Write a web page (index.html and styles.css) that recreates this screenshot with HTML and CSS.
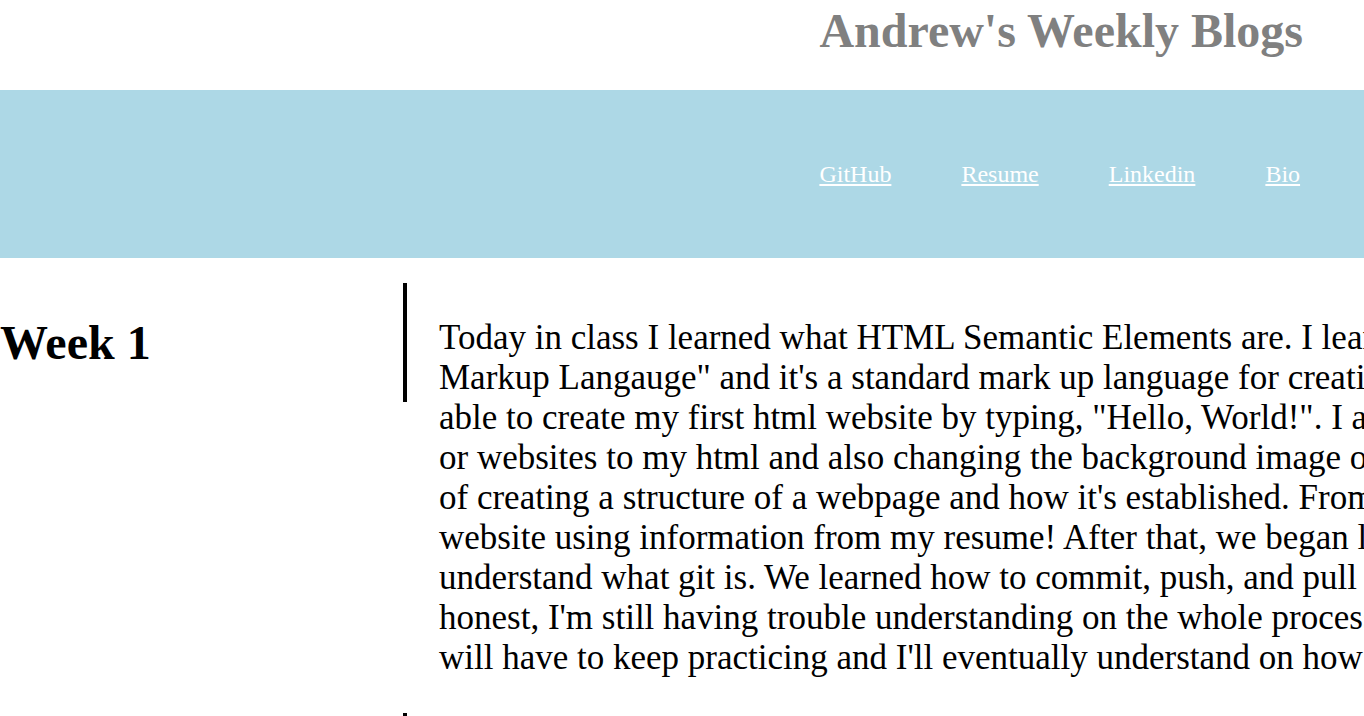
FILE: index.html
```html
<!DOCTYPE html>
<html lang="en">
<head>
<meta charset="utf-8">
<title>Andrew's Weekly Blogs</title>
<link rel="stylesheet" href="styles.css">
</head>
<body>
<header class="site-header">
  <h1 class="site-title">Andrew's Weekly Blogs</h1>
</header>
<nav class="site-nav">
  <a href="#">GitHub</a>
  <a href="#">Resume</a>
  <a href="#">Linkedin</a>
  <a href="#">Bio</a>
</nav>
<main class="posts">
  <section class="week">
    <div class="week-head"><h1>Week 1</h1></div>
    <div class="week-body">
      <p>Today in class I learned what HTML Semantic Elements are. I learned that HTML stands for "Hyper Text<br>
      Markup Langauge" and it's a standard mark up language for creating web pages. I was<br>
      able to create my first html website by typing, "Hello, World!". I also learned how to add images<br>
      or websites to my html and also changing the background image or color. I had a better understanding<br>
      of creating a structure of a webpage and how it's established. From there, I created my own<br>
      website using information from my resume! After that, we began learning about Git and GitHub. I<br>
      understand what git is. We learned how to commit, push, and pull using the terminal. To be<br>
      honest, I'm still having trouble understanding on the whole process of git, but I know that I<br>
      will have to keep practicing and I'll eventually understand on how to use it.</p>
    </div>
  </section>
  <section class="week">
    <div class="week-head"><h1>Week 2</h1></div>
    <div class="week-body">
      <p>This week we continued working with Git and GitHub.</p>
    </div>
  </section>
</main>
</body>
</html>
```
FILE: styles.css
```css
html, body {
  margin: 0;
  padding: 0;
  background: #ffffff;
}

body {
  font-family: "Liberation Serif", "Times New Roman", serif;
  color: #000000;
}

.site-header {
  padding-left: calc(60% + 1px);
}

.site-title {
  margin: 3px 0 32px;
  font-size: 48px;
  font-weight: bold;
  color: #808080;
  white-space: nowrap;
}

.site-nav {
  background: #add8e6;
  padding: 70px 0 70px calc(60% + 1px);
  height: 28px;
  display: flex;
  align-items: center;
  gap: 70px;
  font-size: 24px;
}

.site-nav a {
  color: #ffffff;
  text-decoration: underline;
}

.posts {
  padding-top: 25px;
}

.week {
  display: flex;
  align-items: flex-start;
}

.week-head {
  flex: none;
  width: 403px;
  border-right: 4px solid #000000;
  display: flow-root;
}

.week-head h1 {
  margin: 32px 0;
  font-size: 48px;
  font-weight: bold;
}

.week-body p {
  margin: 35px 0 35px 32px;
  font-size: 35px;
  line-height: 40px;
  white-space: nowrap;
}
```
